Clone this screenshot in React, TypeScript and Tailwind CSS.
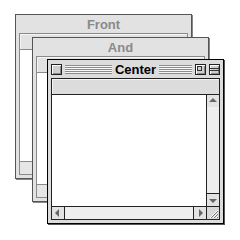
import React from "react";

const font = { fontFamily: '"Liberation Sans", Arial, sans-serif' };

function Stripes() {
  return (
    <div className="h-[9px] flex-1 bg-[repeating-linear-gradient(to_bottom,#8c8c8c_0px,#8c8c8c_1px,#f6f6f6_1px,#f6f6f6_2px)]" />
  );
}

function BoxBtn({ kind }: { kind: "close" | "zoom" | "collapse" }) {
  return (
    <div className="relative h-[11px] w-[11px] shrink-0 border border-[#222] bg-[#cfcfcf] shadow-[inset_1px_1px_0_#fff,inset_-1px_-1px_0_#8a8a8a]">
      {kind === "zoom" && (
        <div className="absolute left-[1px] top-[1px] h-[5px] w-[5px] border border-[#333]" />
      )}
      {kind === "collapse" && (
        <>
          <div className="absolute left-0 right-0 top-[3px] h-px bg-[#333]" />
          <div className="absolute left-0 right-0 top-[5px] h-px bg-[#333]" />
        </>
      )}
    </div>
  );
}

function Arrow({ dir, active }: { dir: "up" | "down" | "left" | "right"; active: boolean }) {
  if (!active) return null;
  const pts =
    dir === "up"
      ? "2,7 6,3 10,7"
      : dir === "down"
      ? "2,5 10,5 6,9"
      : dir === "left"
      ? "7,2 7,10 3,6"
      : "5,2 5,10 9,6";
  return (
    <svg width="12" height="12" viewBox="0 0 12 12" className="block">
      <polygon points={pts} fill="#666" />
    </svg>
  );
}

function GrowBox({ active }: { active: boolean }) {
  return (
    <div className="h-[12px] w-[12px] bg-[#d8d8d8]">
      {active && (
        <svg width="12" height="12" viewBox="0 0 12 12" className="block">
          <line x1="3" y1="11" x2="11" y2="3" stroke="#fff" strokeWidth="1" />
          <line x1="4" y1="11" x2="11" y2="4" stroke="#777" strokeWidth="1" />
          <line x1="6" y1="11" x2="11" y2="6" stroke="#fff" strokeWidth="1" />
          <line x1="7" y1="11" x2="11" y2="7" stroke="#777" strokeWidth="1" />
          <line x1="9" y1="11" x2="11" y2="9" stroke="#fff" strokeWidth="1" />
          <line x1="10" y1="11" x2="11" y2="10" stroke="#777" strokeWidth="1" />
        </svg>
      )}
    </div>
  );
}

function Win({
  title,
  active,
  className,
}: {
  title: string;
  active: boolean;
  className: string;
}) {
  const line = active ? "border-[#222]" : "border-[#8a8a8a]";
  return (
    <div
      className={
        "absolute flex h-[165px] w-[177px] flex-col border " +
        (active
          ? "border-black bg-[#dcdcdc] shadow-[1px_1px_0_#555]"
          : "border-[#555] bg-[#e2e2e2] shadow-[1px_1px_0_#888]") +
        " " +
        className
      }
    >
      {/* title bar */}
      <div className="relative flex h-[18px] shrink-0 items-center gap-[3px] pl-[3px] pr-[3px]">
        {active ? (
          <>
            <BoxBtn kind="close" />
            <Stripes />
            <BoxBtn kind="zoom" />
            <BoxBtn kind="collapse" />
          </>
        ) : null}
        <div className="absolute inset-0 flex items-center justify-center">
          <span
            style={font}
            className={
              "px-[3px] text-[13px] font-bold leading-none " +
              (active ? "bg-[#dcdcdc] text-black" : "text-[#8a8a8a]")
            }
          >
            {title}
          </span>
        </div>
      </div>
      {/* body */}
      <div className="flex flex-1 flex-col px-[3px] pb-[3px]">
        <div className={"flex flex-1 flex-col border " + line}>
          <div
            className={
              "h-[16px] shrink-0 border-b shadow-[inset_1px_1px_0_#f4f4f4] " +
              line +
              (active ? " bg-[#dcdcdc]" : " bg-[#e2e2e2]")
            }
          />
          <div className="flex flex-1">
            <div className="flex-1 bg-white" />
            <div
              className={
                "flex w-[13px] flex-col border-l " +
                line +
                (active ? " bg-[#eeeeee]" : " bg-[#e6e6e6]")
              }
            >
              {active && (
                <>
                  <div className="h-[12px] bg-[#e2e2e2]">
                    <Arrow dir="up" active />
                  </div>
                  <div className="flex-1" />
                  <div className={"h-[13px] border-t bg-[#e2e2e2] " + line}>
                    <Arrow dir="down" active />
                  </div>
                </>
              )}
            </div>
          </div>
          <div className={"flex h-[13px] border-t " + line}>
            <div
              className={
                "flex flex-1 " + (active ? "bg-[#eeeeee]" : "bg-[#e6e6e6]")
              }
            >
              {active && (
                <>
                  <div className={"w-[13px] border-r bg-[#e2e2e2] " + line}>
                    <Arrow dir="left" active />
                  </div>
                  <div className="flex-1" />
                  <div className={"w-[13px] border-l bg-[#e2e2e2] " + line}>
                    <Arrow dir="right" active />
                  </div>
                </>
              )}
            </div>
            <div className={"w-[13px] border-l " + line}>
              <GrowBox active={active} />
            </div>
          </div>
        </div>
      </div>
    </div>
  );
}

export default function App() {
  return (
    <div className="relative h-[240px] w-[240px] overflow-hidden bg-white">
      <Win title="Front" active={false} className="left-[15px] top-[14px]" />
      <Win title="And" active={false} className="left-[32px] top-[37px]" />
      <Win title="Center" active className="left-[47px] top-[59px]" />
    </div>
  );
}
